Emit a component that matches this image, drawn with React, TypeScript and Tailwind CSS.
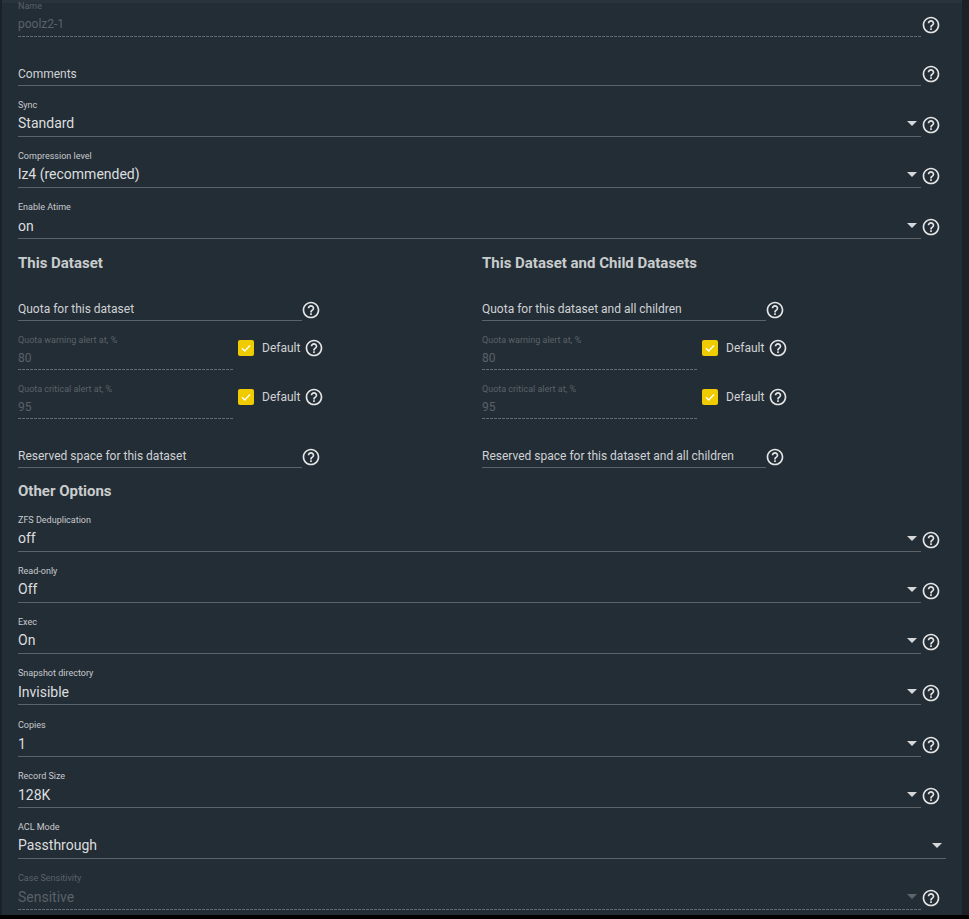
import React from "react";

const DASHED =
  "bg-[repeating-linear-gradient(90deg,#656c71_0_3px,transparent_3px_4px)] bg-[length:100%_1px] bg-bottom bg-no-repeat";

const Help = ({ className = "" }: { className?: string }) => (
  <svg width="20" height="20" viewBox="0 0 24 24" className={"shrink-0 " + className} fill="none">
    <path
      fill="#e5e5e5"
      d="M11 18h2v-2h-2v2zm1-16C6.48 2 2 6.48 2 12s4.48 10 10 10 10-4.48 10-10S17.52 2 12 2zm0 18c-4.41 0-8-3.59-8-8s3.59-8 8-8 8 3.59 8 8-3.59 8-8 8zm0-14c-2.21 0-4 1.79-4 4h2c0-1.1.9-2 2-2s2 .9 2 2c0 2-3 1.75-3 5h2c0-2.25 3-2.5 3-5 0-2.21-1.79-4-4-4z"
    />
  </svg>
);

const Caret = ({ dim }: { dim?: boolean }) => (
  <span
    className={
      "w-0 h-0 border-l-[5px] border-r-[5px] border-t-[5px] border-l-transparent border-r-transparent " +
      (dim ? "border-t-[#5f666b]" : "border-t-[#d5d7d8]")
    }
  />
);

function Select({
  label,
  value,
  disabled,
  noHelp,
  up,
  mt = "mt-[13px]",
}: {
  label: string;
  value: string;
  disabled?: boolean;
  noHelp?: boolean;
  up?: boolean;
  mt?: string;
}) {
  return (
    <div className={"flex items-end h-[38px] " + mt}>
      <div
        className={
          "flex-1 h-[38px] flex flex-col " +
          (disabled ? DASHED : "border-b border-[#5c6368]") +
          (noHelp ? " mr-[16px]" : "")
        }
      >
        <div className={"text-[9px] leading-[12px] h-[13px] " + (disabled ? "text-[#5a6167]" : "text-[#c8cacc]")}>
          {label}
        </div>
        <div className="flex items-center justify-between h-[24px]">
          <span
            className={
              "text-[14px] leading-[20px] " +
              (disabled ? "text-[#5a6167]" : "text-[#dcdedf]") +
              (up ? " -translate-y-px" : "")
            }
          >
            {value}
          </span>
          <span className="mr-[4px] -mt-[2px] flex">
            <Caret dim={disabled} />
          </span>
        </div>
      </div>
      {!noHelp && <Help className="mb-[2px] mr-[21px]" />}
    </div>
  );
}

function NameRow() {
  return (
    <div className="flex items-end h-[37px] -mt-[3px]">
      <div className={"flex-1 h-[37px] flex flex-col " + DASHED}>
        <div className="text-[9px] leading-[12px] text-[#5a6167]">Name</div>
        <div className="mt-[2px] text-[12px] leading-[20px] text-[#5a6167]">poolz2-1</div>
      </div>
      <Help className="mb-[2px] mr-[21px]" />
    </div>
  );
}

function CommentsRow() {
  return (
    <div className="flex items-end h-[38px] mt-[11px]">
      <div className="flex-1 h-[38px] border-b border-[#5c6368] flex flex-col justify-end pb-[1px]">
        <div className="text-[12px] leading-[20px] text-[#d0d2d4]">Comments</div>
      </div>
      <Help className="mb-[2px] mr-[21px]" />
    </div>
  );
}

function Plain({ label, mt }: { label: string; mt: string }) {
  return (
    <div className={"flex items-end " + mt}>
      <div className="w-[284px] h-[24px] pt-[3px] border-b border-[#5c6368] text-[12px] leading-[18px] text-[#d0d2d4]">
        {label}
      </div>
      <Help className="-ml-[1px] mb-[1px]" />
    </div>
  );
}

function Alert({ label, value, mt }: { label: string; value: string; mt: string }) {
  return (
    <div className={"flex items-start " + mt}>
      <div className={"w-[216px] h-[38px] pt-[2px] flex flex-col " + DASHED}>
        <div className="text-[9px] leading-[12px] text-[#5a6167]">{label}</div>
        <div className="mt-[2px] text-[12px] leading-[20px] text-[#5a6167]">{value}</div>
      </div>
      <div className="ml-[4px] mt-[6px] flex items-center">
        <span className="w-[16px] h-[16px] rounded-[2px] bg-[#f0cb00] flex items-center justify-center">
          <svg width="12" height="12" viewBox="0 0 24 24" fill="none" stroke="#ffffff" strokeWidth="2.5">
            <path d="M4 12.5l5.5 5.5L20 7" />
          </svg>
        </span>
        <span className="ml-[8px] text-[12px] leading-[16px] text-[#d0d2d4]">Default</span>
        <Help className="ml-[4px]" />
      </div>
    </div>
  );
}

function Column({ title, a, b }: { title: string; a: string; b: string }) {
  return (
    <div className="w-[464px]">
      <div className="text-[15px] leading-[20px] font-bold text-[#c9cccd]">{title}</div>
      <Plain label={a} mt="mt-[24px]" />
      <Alert label="Quota warning alert at, %" value="80" mt="mt-[11px]" />
      <Alert label="Quota critical alert at, %" value="95" mt="mt-[11px]" />
      <Plain label={b} mt="mt-[25px]" />
    </div>
  );
}

export default function App() {
  return (
    <div
      className="w-[969px] h-[919px] overflow-hidden bg-black"
      style={{ fontFamily: "Roboto, 'Liberation Sans', sans-serif" }}
    >
      <div className="h-[915px] bg-[#1b2127] pl-[2px] pr-[7px]">
        <div className="h-[915px] bg-[#232d36] border-t-[3px] border-[#29333b] pl-[16px]">
          <NameRow />
          <CommentsRow />
          <Select label="Sync" value="Standard" up />
          <Select label="Compression level" value="lz4 (recommended)" up />
          <Select label="Enable Atime" value="on" />
          <div className="flex mt-[14px]">
            <Column title="This Dataset" a="Quota for this dataset" b="Reserved space for this dataset" />
            <Column
              title="This Dataset and Child Datasets"
              a="Quota for this dataset and all children"
              b="Reserved space for this dataset and all children"
            />
          </div>
          <div className="text-[15px] leading-[20px] font-bold text-[#c9cccd] mt-[13px]">Other Options</div>
          <Select label="ZFS Deduplication" value="off" up />
          <Select label="Read-only" value="Off" up />
          <Select label="Exec" value="On" up />
          <Select label="Snapshot directory" value="Invisible" />
          <Select label="Copies" value="1" mt="mt-[14px]" />
          <Select label="Record Size" value="128K" />
          <Select label="ACL Mode" value="Passthrough" noHelp up />
          <Select label="Case Sensitivity" value="Sensitive" disabled />
        </div>
      </div>
    </div>
  );
}
